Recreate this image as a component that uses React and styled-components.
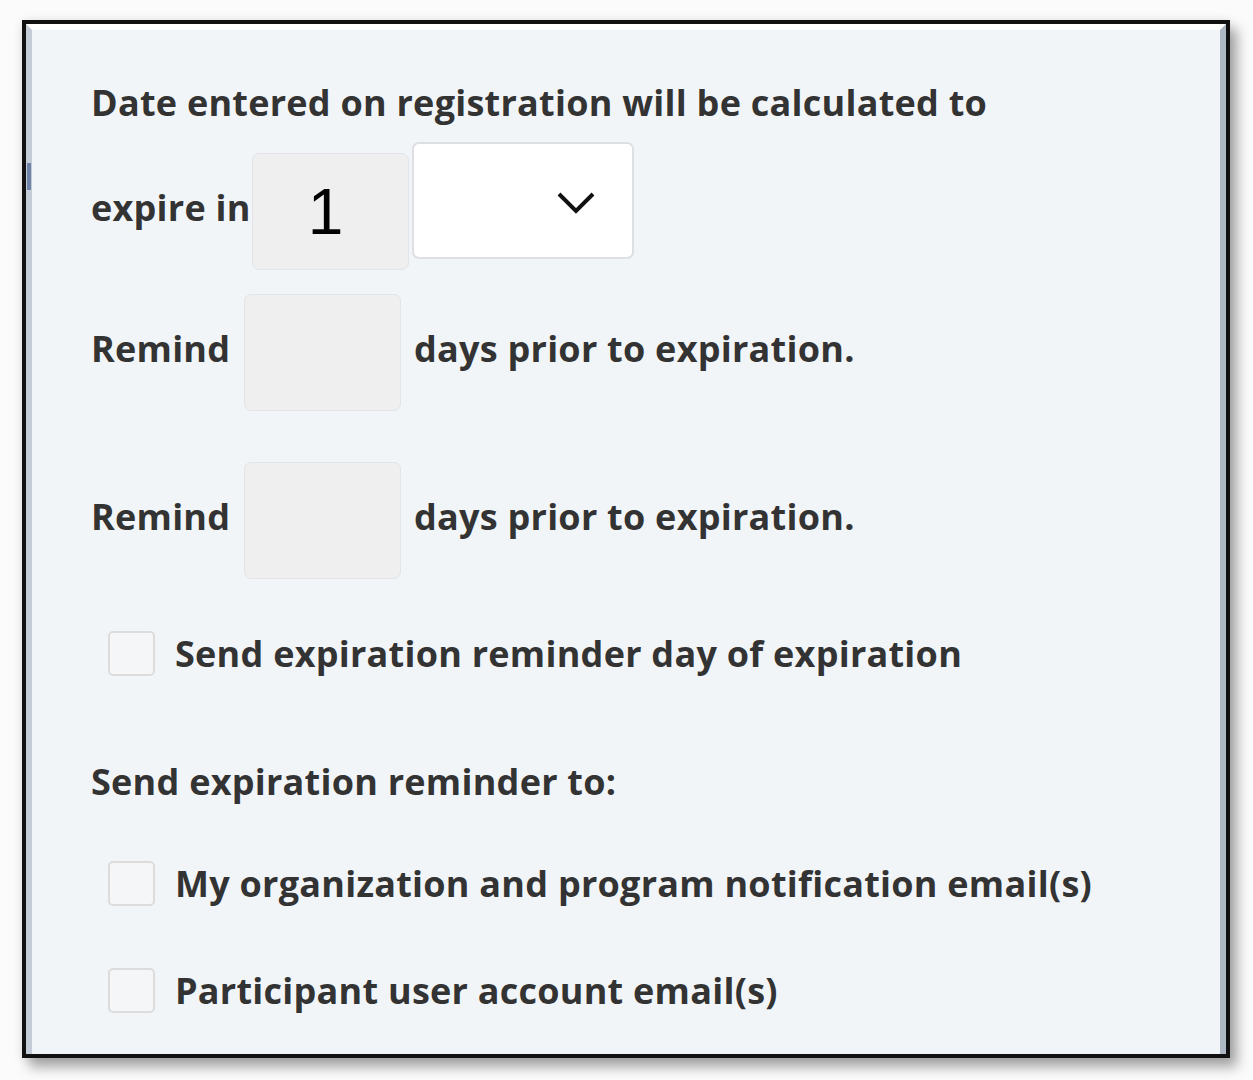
import React from "react";
import styled, { createGlobalStyle } from "styled-components";

const Global = createGlobalStyle`
  html, body { margin: 0; padding: 0; background: #ffffff; }
  body { font-family: "Open Sans", "Liberation Sans", sans-serif; }
  * { box-sizing: border-box; }
`;

const Page = styled.div`
  width: 1253px;
  height: 1080px;
  padding: 20px 0 0 22px;
  background: #fbfbfb;
`;

const Frame = styled.div`
  position: relative;
  width: 1208px;
  height: 1038px;
  border: 4px solid #111;
  background: #f2f5f8;
  box-shadow: 7px 9px 12px rgba(0, 0, 0, 0.35), 0 0 10px rgba(0, 0, 0, 0.08);
`;

const Inner = styled.div`
  height: 100%;
  border-left: 6px solid #c3ccd7;
  border-right: 6px solid #aeb8c4;
  border-top: 6px solid #ffffff;
  padding: 53px 0 0 59px;
  display: flex;
  flex-direction: column;
  color: #333333;
  font-size: 36px;
  font-weight: 700;
  letter-spacing: 0.25px;
`;

const Marker = styled.div`
  position: absolute;
  left: 1px;
  top: 139px;
  width: 4px;
  height: 27px;
  background: #6f82a8;
`;

const Line = styled.div`
  line-height: 40px;
  height: 40px;
  white-space: nowrap;
  margin-top: ${(p) => p.$mt || 0}px;
`;

const Row = styled.div`
  display: flex;
  align-items: ${(p) => p.$align || "center"};
  margin-top: ${(p) => p.$mt || 0}px;
`;

const Label = styled.span`
  line-height: 40px;
  white-space: nowrap;
  flex: none;
  width: ${(p) => (p.$w ? `${p.$w}px` : "auto")};
  margin-top: ${(p) => p.$mt || 0}px;
  margin-bottom: ${(p) => p.$mb || 0}px;
`;

const NumBox = styled.div`
  width: 157px;
  height: 117px;
  margin: ${(p) => p.$m || "0"};
  background: #efefef;
  border: 1px solid #e2e4e7;
  border-radius: 7px;
  display: flex;
  align-items: center;
  justify-content: center;
  padding-right: 10px;
  font-family: "Liberation Sans", Arial, sans-serif;
  font-weight: 400;
  font-size: 64px;
  letter-spacing: 0;
  color: #000;
  flex: none;
`;

const Select = styled.div`
  width: 222px;
  height: 117px;
  margin-left: 3px;
  background: #ffffff;
  border: 2px solid #dedfe2;
  border-radius: 7px;
  display: flex;
  align-items: center;
  justify-content: flex-end;
  padding: 2px 36px 0 0;
`;

const CheckRow = styled.div`
  display: flex;
  align-items: center;
  margin-top: ${(p) => p.$mt || 0}px;
  padding-left: 17px;
`;

const Box = styled.div`
  width: 47px;
  height: 45px;
  border: 2px solid #dcdcdc;
  border-radius: 5px;
  background: #f4f6f8;
  margin-right: 20px;
  flex: none;
`;

const Chevron = () => (
  <svg width="40" height="24" viewBox="0 0 40 24">
    <polyline points="3,4 20,21 37,4" fill="none" stroke="#111" strokeWidth="4" />
  </svg>
);

export default function App() {
  return (
    <Page>
      <Global />
      <Frame>
        <Marker />
        <Inner>
          <Line>Date entered on registration will be calculated to</Line>
          <Row $align="flex-start" $mt={19}>
            <Label $w={161} $mt={46}>expire in</Label>
            <NumBox $m="11px 0 0 0">1</NumBox>
            <Select>
              <Chevron />
            </Select>
          </Row>
          <Row $mt={24}>
            <Label $w={153} $mb={7}>Remind</Label>
            <NumBox $m="0 13px 0 0" />
            <Label $mb={7}>days prior to expiration.</Label>
          </Row>
          <Row $mt={51}>
            <Label $w={153} $mb={7}>Remind</Label>
            <NumBox $m="0 13px 0 0" />
            <Label $mb={7}>days prior to expiration.</Label>
          </Row>
          <CheckRow $mt={52}>
            <Box />
            <Label>Send expiration reminder day of expiration</Label>
          </CheckRow>
          <Line $mt={86}>Send expiration reminder to:</Line>
          <CheckRow $mt={59}>
            <Box />
            <Label>My organization and program notification email(s)</Label>
          </CheckRow>
          <CheckRow $mt={62}>
            <Box />
            <Label>Participant user account email(s)</Label>
          </CheckRow>
        </Inner>
      </Frame>
    </Page>
  );
}
